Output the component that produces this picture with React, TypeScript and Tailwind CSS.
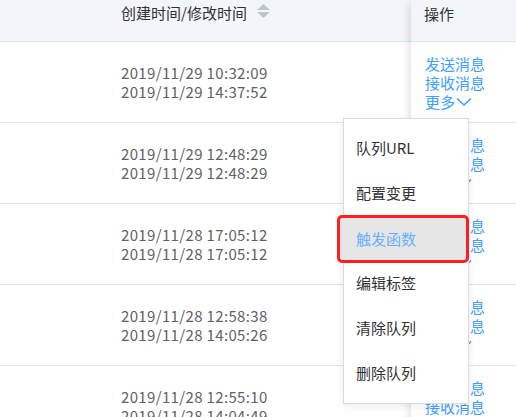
const rows = [
  ['2019/11/29 10:32:09', '2019/11/29 14:37:52'],
  ['2019/11/29 12:48:29', '2019/11/29 12:48:29'],
  ['2019/11/28 17:05:12', '2019/11/28 17:05:12'],
  ['2019/11/28 12:58:38', '2019/11/28 14:05:26'],
  ['2019/11/28 12:55:10', '2019/11/28 14:04:49'],
]

const menu = ['队列URL', '配置变更', '触发函数', '编辑标签', '清除队列', '删除队列']

const font = { fontFamily: '"Microsoft YaHei", "Noto Sans CJK SC", sans-serif' }

function SortIcon() {
  return (
    <svg width="13" height="15" viewBox="0 0 13 15" className="ml-[10px] mt-[1px]">
      <path d="M6.5 0 L13 6 L0 6 Z" fill="#c0c4cc" />
      <path d="M0 8 L13 8 L6.5 14 Z" fill="#c0c4cc" />
    </svg>
  )
}

function Chevron() {
  return (
    <svg width="16" height="10" viewBox="0 0 16 10" className="ml-[1px] mt-[1px]">
      <polyline points="1,1.5 8,8 15,1.5" fill="none" stroke="#409eff" strokeWidth="1.6" />
    </svg>
  )
}

export default function App() {
  return (
    <div className="relative w-[516px] h-[417px] overflow-hidden bg-white text-[15px]" style={font}>
      <div className="flex">
        {/* main columns */}
        <div className="flex-1">
          <div className="h-[42px] bg-[#f2f5f9] border-b border-[#dfe4ec] flex items-start pl-[121px] pt-[3px]">
            <span className="text-[#303133] leading-[20px]">创建时间/修改时间</span>
            <SortIcon />
          </div>
          {rows.map((r, i) => (
            <div key={i} className="h-[81px] border-b border-[#dfe4ec] flex flex-col justify-center pl-[121px] text-[#606266] leading-[19px] tracking-[0.35px]">
              <span>{r[0]}</span>
              <span>{r[1]}</span>
            </div>
          ))}
        </div>

        {/* fixed action column */}
        <div className="w-[105px] shrink-0 bg-white shadow-[-5px_0_8px_-3px_rgba(0,0,0,0.12)] relative">
          <div className="h-[42px] bg-[#f2f5f9] border-b border-[#dfe4ec] pl-[13px] pt-[3px]">
            <span className="text-[#303133] leading-[20px]">操作</span>
          </div>
          {rows.map((_, i) => (
            <div key={i} className="h-[81px] border-b border-[#dfe4ec] flex flex-col justify-center pl-[14px] text-[#409eff] leading-[19px]">
              <span>发送消息</span>
              <span>接收消息</span>
              <span className="flex items-center">
                更多
                <Chevron />
              </span>
            </div>
          ))}
        </div>
      </div>

      {/* dropdown menu */}
      <div className="absolute left-[343px] top-[118px] w-[126px] h-[286px] bg-white border border-[#dcdcdc] shadow-[0_2px_8px_rgba(0,0,0,0.08)] py-[7px]">
        {menu.map(m => (
          <div key={m} className="h-[45px] flex items-center pl-[12px] text-[#303133]">
            {m}
          </div>
        ))}
      </div>

      {/* highlight annotation over the hovered item */}
      <div className="absolute left-[337px] top-[215px] w-[132px] h-[48px] rounded-[5px] border-[3px] border-[#ff1f1f] bg-[#e6e6e6] flex items-center pl-[16px] text-[#66b1ff]">
        触发函数
      </div>
    </div>
  )
}
